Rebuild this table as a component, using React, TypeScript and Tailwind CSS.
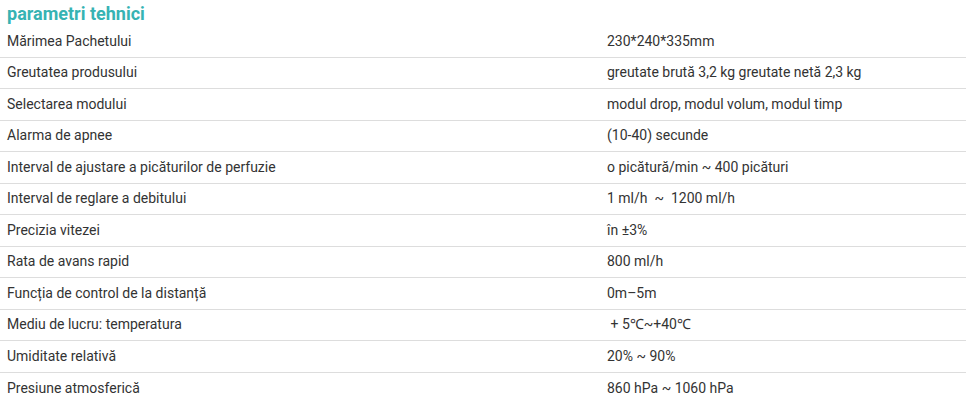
import React from "react";

const rows: [string, string][] = [
  ["Mărimea Pachetului", "230*240*335mm"],
  ["Greutatea produsului", "greutate brută 3,2 kg greutate netă 2,3 kg"],
  ["Selectarea modului", "modul drop, modul volum, modul timp"],
  ["Alarma de apnee", "(10-40) secunde"],
  ["Interval de ajustare a picăturilor de perfuzie", "o picătură/min ~ 400 picături"],
  ["Interval de reglare a debitului", "1 ml/h  ~  1200 ml/h"],
  ["Precizia vitezei", "în ±3%"],
  ["Rata de avans rapid", "800 ml/h"],
  ["Funcția de control de la distanță", "0m–5m"],
  ["Mediu de lucru: temperatura", " + 5℃~+40℃"],
  ["Umiditate relativă", "20% ~ 90%"],
  ["Presiune atmosferică", "860 hPa ~ 1060 hPa"],
];

export default function App() {
  return (
    <div className="w-[966px] h-[411px] bg-white overflow-hidden" style={{ fontFamily: "Roboto, 'Liberation Sans', sans-serif" }}>
      <h2 className="px-[7px] pt-[2px] h-[26px] text-[18px] leading-[24px] font-bold text-[#36b3b3]">parametri tehnici</h2>
      <div className="flex flex-col">
        {rows.map(([k, v], i) => (
          <div
            key={i}
            className={`flex h-[31.5px] items-center text-[14px] text-[#333] ${i < rows.length - 1 ? "border-b border-[#dddddd]" : ""}`}
          >
            <div className="w-[600px] pl-[7px] whitespace-pre">{k}</div>
            <div className="flex-1 pl-[7px] whitespace-pre">{v}</div>
          </div>
        ))}
      </div>
    </div>
  );
}
